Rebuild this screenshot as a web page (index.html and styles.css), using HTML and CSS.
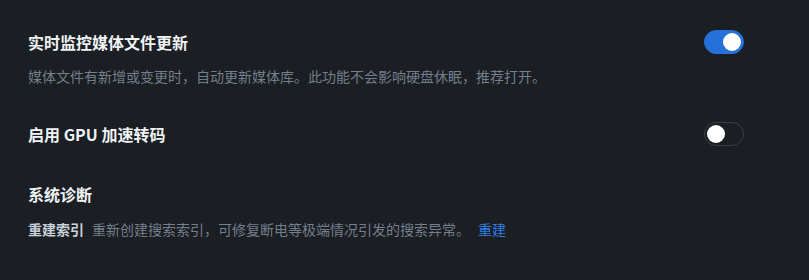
FILE: index.html
```html
<!DOCTYPE html>
<html lang="zh-CN"><head>
<meta charset="utf-8">
<title>设置</title>
<link rel="stylesheet" href="styles.css">
</head><body>
<div class="settings">
<div class="item">
	<div class="row">
		<div class="label">实时监控媒体文件更新</div>
		<span class="switch on"><span class="knob"></span></span>
	</div>
	<div class="desc">媒体文件有新增或变更时，自动更新媒体库。此功能不会影响硬盘休眠，推荐打开。</div>
</div>
<div class="item">
	<div class="row">
		<div class="label">启用 GPU 加速转码</div>
		<span class="switch"><span class="knob"></span></span>
	</div>
</div>
<div class="item">
	<div class="label">系统诊断</div>
	<div class="action">
		<span class="action-name">重建索引</span>
		<span class="desc">重新创建搜索索引，可修复断电等极端情况引发的搜索异常。</span>
		<a class="link" href="#">重建</a>
	</div>
</div>
</div>
</body></html>
```

FILE: styles.css
```css
html, body {
	margin: 0;
	padding: 0;
	background: #1b1e23;
	font-family: "Noto Sans CJK SC", "Noto Sans", sans-serif;
}

.settings {
	display: flex;
	flex-direction: column;
	gap: 36px;
	padding: 30px 65px 0 28px;
}

.item {
	display: flex;
	flex-direction: column;
	gap: 12px;
}

.row {
	display: flex;
	align-items: center;
	justify-content: space-between;
	height: 24px;
}

.label {
	font-size: 16px;
	line-height: 24px;
	font-weight: bold;
	color: #f0f3f6;
}

.desc {
	font-size: 14px;
	line-height: 20px;
	color: #737f8c;
}

.action {
	display: flex;
	align-items: center;
	gap: 8px;
	font-size: 14px;
	line-height: 20px;
	margin-top: 1px;
}

.action-name {
	font-weight: bold;
	color: #c9d1d9;
}

.link {
	color: #2f7fe6;
	text-decoration: none;
}

.switch {
	box-sizing: border-box;
	display: flex;
	align-items: center;
	width: 40px;
	height: 24px;
	border-radius: 12px;
	border: 1px solid #3a3f47;
	padding: 0 2px;
}

.switch.on {
	background: #2670d9;
	border-color: #2670d9;
	justify-content: flex-end;
}

.knob {
	width: 18px;
	height: 18px;
	border-radius: 50%;
	background: #fff;
}
```
